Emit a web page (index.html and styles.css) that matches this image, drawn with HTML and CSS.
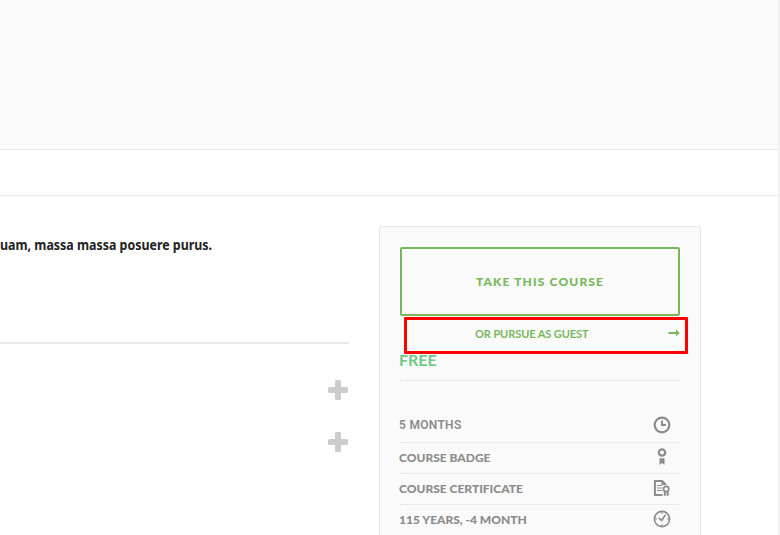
FILE: index.html
```html
<!DOCTYPE html>
<html lang="en">
<head>
<meta charset="utf-8">
<title>Course</title>
<link rel="stylesheet" href="styles.css">
</head>
<body>
<div class="page">
  <header class="hero"></header>
  <div class="subnav"></div>
  <main class="content">
    <section class="description">
      <p class="lead"><span>uam, massa massa posuere purus.</span></p>
      <div class="accordion">
        <svg class="plus" viewBox="0 0 20 20"><path d="M8.500 0h3q1.500 0 1.500 1.500V7h5.500q1.500 0 1.500 1.500v3q0 1.500-1.500 1.500H13v5.500q0 1.500-1.500 1.500h-3Q7 20 7 18.500V13H1.500Q0 13 0 11.500v-3Q0 7 1.500 7H7V1.500Q7 0 8.500 0z"/></svg>
        <svg class="plus" viewBox="0 0 20 20"><path d="M8.500 0h3q1.500 0 1.500 1.500V7h5.500q1.500 0 1.500 1.500v3q0 1.500-1.500 1.500H13v5.500q0 1.500-1.500 1.500h-3Q7 20 7 18.500V13H1.500Q0 13 0 11.500v-3Q0 7 1.500 7H7V1.500Q7 0 8.500 0z"/></svg>
      </div>
    </section>
    <aside class="card">
      <a class="take">TAKE THIS COURSE</a>
      <a class="guest"><span>OR PURSUE AS GUEST</span>
        <svg class="arrow" viewBox="0 0 12 8"><path d="M.5 3H8V.5L11.700 4 8 7.500V5H.5z"/></svg>
      </a>
      <div class="highlight"></div>
      <div class="price"><span>FREE</span></div>
      <ul class="details">
        <li class="duration"><span>5 MONTHS</span>
          <svg viewBox="0 0 18 18"><circle cx="9" cy="9" r="7.300" fill="none" stroke="#8c8c8c" stroke-width="2.200"/><path d="M8 4.500h2v3.500h3v2H8z"/></svg></li>
        <li class="badge"><span>COURSE BADGE</span>
          <svg viewBox="0 0 18 18"><circle cx="9" cy="4.500" r="3.200" fill="none" stroke="#8c8c8c" stroke-width="2.300"/><path d="M6.500 10.200h5V17L9 15l-2.500 2z"/></svg></li>
        <li class="certificate"><span>COURSE CERTIFICATE</span>
          <svg viewBox="0 0 18 18"><path d="M9.500 16H1.900V2H9l4 3.800" fill="none" stroke="#8c8c8c" stroke-width="2"/><path d="M8.500 1l5 5h-5zM4 6h5v1H4zm0 2.500h5.500v1H4zM4 11h5.500v1H4z"/><circle cx="13.200" cy="10" r="2.600" fill="none" stroke="#8c8c8c" stroke-width="1.600"/><path d="M10.800 12.300h2V17l-2-.5zm2.900 0h2v4.200l-2 .5z"/></svg></li>
        <li class="time"><span>115 YEARS, -4 MONTH</span>
          <svg viewBox="0 0 18 18"><circle cx="9" cy="9" r="7.600" fill="none" stroke="#8c8c8c" stroke-width="1.600"/><path d="M5.800 7.800l2.900 2.600 3.800-5.700" fill="none" stroke="#8c8c8c" stroke-width="1.700"/><path d="M8.500 2h1v2h-1zm0 12h1v2h-1zM2 8.500h2v1H2zm12 0h2v1h-2z"/></svg></li>
      </ul>
    </aside>
  </main>
</div>
</body>
</html>
```

FILE: styles.css
```css
* { box-sizing: border-box; }
body {
  margin: 0;
  height: 535px;
  overflow: hidden;
  background: #fff;
  font-family: Lato, "Liberation Sans", sans-serif;
}
.page {
  height: 535px;
  overflow: hidden;
  border-right: 2px solid #f1f1f1;
}
.hero {
  height: 150px;
  background: #fafafa;
  border-bottom: 1px solid #e8e8e8;
}
.subnav {
  height: 46px;
  border-bottom: 1px solid #e8e8e8;
}
.content {
  display: flex;
  gap: 30px;
  padding-top: 30px;
}
.description { width: 349px; }
.lead {
  display: flex;
  margin: 0;
  width: 349px;
  height: 118px;
  padding-top: 9px;
  border-bottom: 2px solid #e8e8e8;
  color: #222;
  font: 700 14px/20px "Noto Sans", sans-serif;
  white-space: nowrap;
}
.lead span {
  height: 20px;
  transform: scaleX(.886);
  transform-origin: left;
}
.accordion {
  display: flex;
  flex-direction: column;
  align-items: flex-end;
  gap: 32px;
  padding: 36px 1px 0 0;
}
.plus { width: 20px; height: 20px; fill: #ccc; }
.card {
  position: relative;
  width: 322px;
  height: 340px;
  padding: 20px;
  background: #fafafa;
  border: 1px solid #e6e6e6;
  border-radius: 2px 2px 0 0;
}
.take {
  display: flex;
  align-items: center;
  justify-content: center;
  height: 69px;
  border: 2px solid #78b85a;
  border-radius: 2px;
  color: #78b85a;
  font-size: 12px;
  font-weight: 900;
  letter-spacing: 1.15px;
}
.guest {
  display: flex;
  align-items: center;
  height: 34px;
  padding-left: 75px;
  color: #78b85a;
  font-size: 11px;
  font-weight: 700;
  letter-spacing: -.08px;
}
.arrow { width: 12px; height: 8px; margin-left: auto; fill: #78b85a; }
.highlight {
  position: absolute;
  left: 24px;
  top: 90px;
  width: 284px;
  height: 37px;
  border: 3px solid #f00;
  border-radius: 1px;
}
.price {
  height: 31px;
  border-bottom: 1px dotted #ddd;
  color: #70c989;
  font-size: 16px;
  line-height: 19px;
  font-weight: 700;
}
.price span, .details span { margin-left: -1px; }
.details {
  margin: 0;
  padding: 28px 0 0;
  list-style: none;
  color: #8c8c8c;
  font-size: 12px;
  font-weight: 900;
}
.details li {
  display: flex;
  align-items: center;
  justify-content: space-between;
  height: 31px;
  padding: 0 9px 2px 0;
  border-bottom: 1px dotted #ddd;
}
.details .duration {
  height: 34px;
  font-family: Roboto, sans-serif;
  font-weight: 600;
  letter-spacing: .3px;
}
.details svg { width: 18px; height: 18px; fill: #8c8c8c; }
```
